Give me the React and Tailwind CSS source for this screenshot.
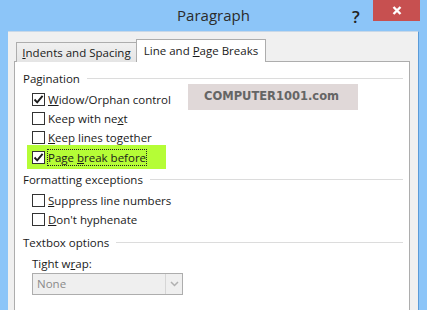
import React from 'react'

const font = { fontFamily: '"Open Sans", "Noto Sans", sans-serif' }

function Check() {
  return (
    <svg width="11" height="11" viewBox="0 0 11 11">
      <path d="M1.5 5.5 L4.2 8.3 L9.6 1.8" fill="none" stroke="#1c1c1c" strokeWidth="1.9" />
    </svg>
  )
}

function Box({ checked }) {
  return (
    <span className="w-[13px] h-[13px] border border-[#333] bg-white flex items-center justify-center shrink-0">
      {checked && <Check />}
    </span>
  )
}

function Row({ checked, children, focus }) {
  return (
    <div className="h-[19px] flex items-center pl-[17px]">
      <Box checked={checked} />
      <span className={'ml-[2px] leading-[15px] ' + (focus ? 'border border-dotted border-[#222]' : 'border border-transparent')}>
        {children}
      </span>
    </div>
  )
}

function Label({ children, className = '' }) {
  return (
    <div className={'h-[19px] flex items-center pl-[8px] pr-[6px] ' + className}>
      <span>{children}</span>
      <span className="flex-1 border-t border-[#dcdcdc] ml-[7px]" />
    </div>
  )
}

export default function App() {
  return (
    <div className="w-[427px] h-[310px] bg-[#8cc5f8] flex flex-col overflow-hidden text-[11.5px] text-[#1a1a1a]" style={font}>
      <div className="h-[31px] relative flex items-center justify-center shrink-0">
        <span className="text-[15px] text-[#2b2b2b] mt-[-1px]">Paragraph</span>
        <span className="absolute left-[352px] top-[4px] text-[17px] font-semibold text-[#222]">?</span>
        <div className="absolute left-[373px] top-0 w-[47px] h-[21px] bg-[#c75050] flex items-center justify-center">
          <svg width="10" height="9" viewBox="0 0 10 9">
            <path d="M1.5 1 L8.5 8 M8.5 1 L1.5 8" stroke="white" strokeWidth="2.4" />
          </svg>
        </div>
      </div>
      <div className="flex-1 ml-[8px] mr-[8px] bg-[#f0f0f0] border-t border-r border-[#c8d8e8] pt-[7px] pl-[6px] pr-[8px] border-r-[#5a9bd8]">
        <div className="flex items-end h-[23px] relative z-10 pl-[2px]">
          <div className="w-[121px] h-[20px] border border-b-0 border-[#adadad] bg-gradient-to-b from-[#f0f0f0] to-[#e5e5e5] flex items-center justify-center">
            <span><span className="underline">I</span>ndents and Spacing</span>
          </div>
          <div className="w-[130px] h-[23px] -ml-px border border-b-0 border-[#adadad] bg-white flex items-center justify-center pb-[1px]">
            <span>Line and <span className="underline">P</span>age Breaks</span>
          </div>
        </div>
        <div className="relative -mt-px border border-[#adadad] bg-white h-[260px] pt-[7px]">
          <Label>Pagination</Label>
          <div className="mt-[2px]">
            <Row checked><span className="underline">W</span>idow/Orphan control</Row>
            <Row>Keep with ne<span className="underline">x</span>t</Row>
            <Row><span className="underline">K</span>eep lines together</Row>
          </div>
          <div className="ml-[12px] -mt-[2px] w-[139px] h-[24px] bg-[#b5fd36] flex items-center">
            <div className="-ml-[12px]">
              <Row checked focus>Page <span className="underline">b</span>reak before</Row>
            </div>
          </div>
          <Label className="mt-[1px]">Formatting exceptions</Label>
          <div className="mt-[2px]">
            <Row><span className="underline">S</span>uppress line numbers</Row>
            <Row><span className="underline">D</span>on't hyphenate</Row>
          </div>
          <Label className="mt-[4px]">Textbox options</Label>
          <div className="pl-[17px] mt-[2px] h-[19px] flex items-center">
            Tight w<span className="underline">r</span>ap:
          </div>
          <div className="ml-[17px] w-[151px] h-[22px] border border-[#adadad] bg-[#efefef] flex items-center">
            <span className="flex-1 pl-[4px] text-[#8a8a8a]">None</span>
            <span className="w-[17px] h-full border-l border-[#d6d6d6] flex items-center justify-center">
              <svg width="9" height="6" viewBox="0 0 9 6">
                <path d="M1 1 L4.5 4.5 L8 1" fill="none" stroke="#b0b0b0" strokeWidth="1.5" />
              </svg>
            </span>
          </div>
          <div className="absolute left-[173px] top-[22px] w-[170px] h-[26px] bg-[#e0d8d8] flex items-center justify-center pr-[3px]">
            <span className="text-[11.5px] font-bold text-[#656565]" style={{ fontFamily: '"DejaVu Sans", sans-serif' }}>COMPUTER1001.com</span>
          </div>
        </div>
      </div>
    </div>
  )
}
